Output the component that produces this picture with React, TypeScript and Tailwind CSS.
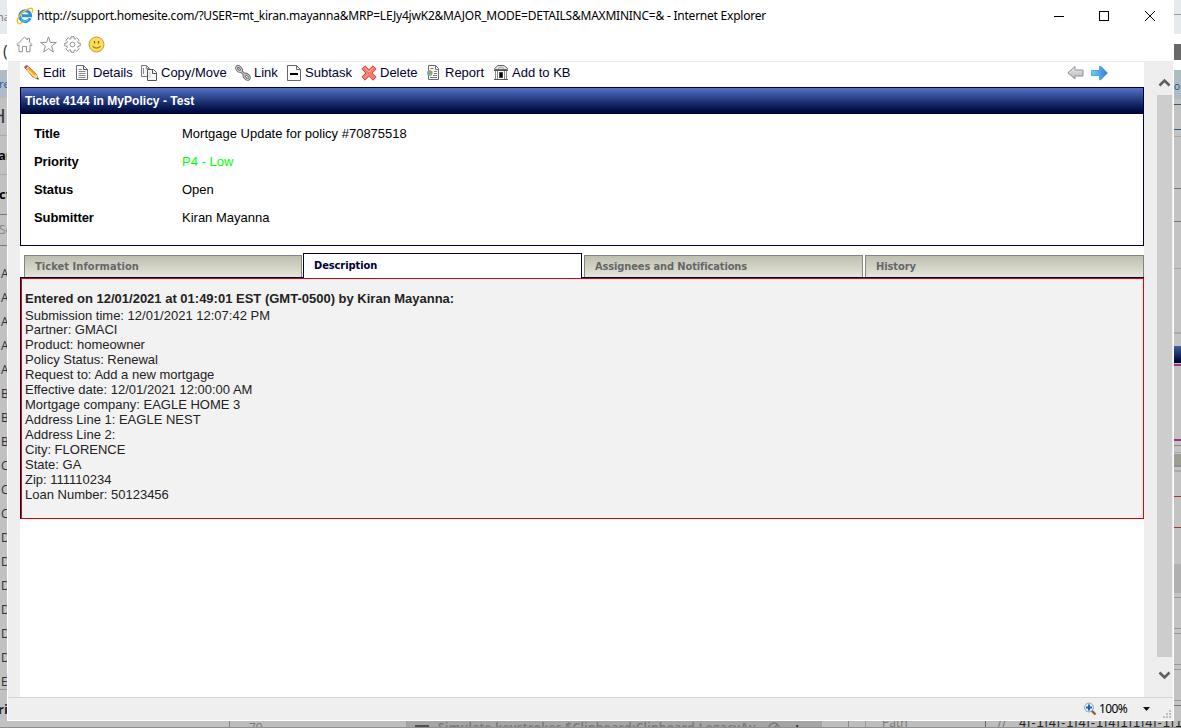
import React from "react";

const leftRows = ["A", "A", "A", "A", "A", "B", "B", "B", "C", "C", "C", "D", "D", "D", "D", "D", "D", "E"];

const description = [
  "Partner: GMACI",
  "Product: homeowner",
  "Policy Status: Renewal",
  "Request to: Add a new mortgage",
  "Effective date: 12/01/2021 12:00:00 AM",
  "Mortgage company: EAGLE HOME 3",
  "Address Line 1: EAGLE NEST",
  "Address Line 2:",
  "City: FLORENCE",
  "State: GA",
  "Zip: 111110234",
  "Loan Number: 50123456",
];

const fields = [
  { label: "Title", value: "Mortgage Update for policy #70875518", color: "text-black" },
  { label: "Priority", value: "P4 - Low", color: "text-[#00ff00]" },
  { label: "Status", value: "Open", color: "text-black" },
  { label: "Submitter", value: "Kiran Mayanna", color: "text-black" },
];

function IeLogo() {
  return (
    <svg width="18" height="18" viewBox="0 0 18 18" fill="none">
      <path d="M14.2 11.2A5.4 5.4 0 1 1 14.6 8.8H6" stroke="#2795dc" strokeWidth="3" />
      <path d="M13 11.5A5 5 0 0 1 5 12.5" stroke="#55bdf0" strokeWidth="1.2" />
      <path d="M2.3 16.5C-.5 14 3 7.5 9 3.6 13 1 16.8.3 16.7 3.2c0 .8-.3 1.6-.8 2.5" stroke="#efc02d" strokeWidth="1.5" />
      <path d="M2.3 16.5c1 .6 2.6 0 4-1" stroke="#efc02d" strokeWidth="1.3" />
    </svg>
  );
}

function HomeIcon() {
  return (
    <svg width="17" height="17" viewBox="0 0 17 17" fill="none" stroke="#929292">
      <path d="M.8 8.7 8.5 1l3 3V2.3h2v3.8l2.7 2.6-1.1 1-1.1-1v7h-3.5v-5.2h-4v5.2H3v-7l-1.1 1z" />
    </svg>
  );
}

function StarIcon() {
  return (
    <svg width="17" height="17" viewBox="0 0 17 17" fill="none" stroke="#929292">
      <path d="m8.500 .8 1.900 5.600 6 .1-4.800 3.600 1.700 5.900-4.800-3.400L3.700 16l1.700-5.900L.6 6.500l6-.1z" />
    </svg>
  );
}

function GearIcon() {
  return (
    <svg width="17" height="17" viewBox="0 0 17 17" fill="none" stroke="#929292">
      <path d="M7 .7h3v2l1.200.5L12.700 1.800l2.400 2.400-1.400 1.500.5 1.300h2v3h-2l-.5 1.300 1.400 1.500-2.400 2.400-1.500-1.400-1.200.5v2H7v-2l-1.200-.5-1.500 1.400-2.400-2.400 1.400-1.500L2.800 10h-2V7h2l.5-1.300-1.400-1.500 2.400-2.400 1.500 1.400L7 2.700z" />
      <circle cx="8.5" cy="8.5" r="2.4" />
    </svg>
  );
}

function SmileIcon() {
  return (
    <svg width="17" height="17" viewBox="0 0 17 17">
      <circle cx="8.5" cy="8.5" r="7.5" fill="#ffdc50" stroke="#b69b4d" />
      <path d="M6.500 5v2.500M10.500 5v2.500" stroke="#7a6327" strokeWidth="1.300" />
      <path d="M4.500 10c1.500 2.800 6.500 2.800 8 0" fill="none" stroke="#9c7d2c" strokeWidth="1.1" />
    </svg>
  );
}

function PencilIcon() {
  return (
    <svg width="16" height="16" viewBox="0 0 16 16">
      <path d="m1.5 3.2 2.6-2L12.3 9l2.2 5.3-5.6-2.1z" fill="#f6a91e" stroke="#9a5a12" strokeWidth=".7" />
      <path d="m3.6 4.8 6.5 6.4" stroke="#ffe07b" strokeWidth="1.5" />
      <path d="m9 12.1 3.2-3 2.4 5.3z" fill="#efd4ad" />
      <path d="m12.3 13.500 1-1.100 1.300 2.200z" fill="#222" />
      <path d="M.7 2.8C.3 1.2 2.4-.1 3.9 1L2.4 4z" fill="#e04b55" stroke="#a62f38" strokeWidth=".6" />
      <path d="m2.3 4 2.2-2.3" stroke="#d2dce5" strokeWidth="1.2" />
    </svg>
  );
}

function PageIcon() {
  return (
    <svg width="12" height="15" viewBox="0 0 12 15" fill="none">
      <path d="M.5.5h7l4 4v10H.5z" fill="#fafafa" stroke="#6d6d6d" />
      <path d="M7.5.5v4h4" stroke="#555" />
      <path d="M2.5 4.5H6m-3.5 2h7m-7 2h7m-7 2h7m-7 2h7" stroke="#888" />
    </svg>
  );
}

function CopyIcon() {
  return (
    <svg width="17" height="16" viewBox="0 0 17 16" fill="none">
      <path d="M.5.5h5l3 3v8h-8z" fill="#f6f6f6" stroke="#777" />
      <path d="M5.5.5v3h3M2.5 3v6" stroke="#888" />
      <path d="M6.5 4.500h6l3 3v8h-9z" fill="#f6f6f6" stroke="#555" />
      <path d="M11.500 4.500v4h4" stroke="#555" />
      <path d="M8.5 7v6" stroke="#ddd" strokeWidth="2" />
    </svg>
  );
}

function ChainIcon() {
  return (
    <svg width="16" height="16" viewBox="0 0 16 16" fill="none">
      <g stroke="#666" strokeWidth="2.800">
        <ellipse cx="4" cy="4" rx="3" ry="1.8" transform="rotate(45 4 4)" />
        <ellipse cx="11.7" cy="11.7" rx="3.1" ry="1.9" transform="rotate(45 11.7 11.7)" />
        <path d="m5.4 5.6 5 4.8" />
      </g>
      <g stroke="#cfcfcf" strokeWidth="1.1">
        <ellipse cx="4" cy="4" rx="3" ry="1.8" transform="rotate(45 4 4)" />
        <ellipse cx="11.7" cy="11.7" rx="3.1" ry="1.9" transform="rotate(45 11.7 11.7)" />
        <path d="m5.4 5.6 5 4.8" />
      </g>
    </svg>
  );
}

function SubtaskIcon() {
  return (
    <svg width="14" height="16" viewBox="0 0 14 16" fill="none">
      <path d="M.5.5h9l4 4v11H.5z" fill="#fafafa" stroke="#666" />
      <path d="M9.5.5v4h4" stroke="#666" />
      <path d="M3 9h8" stroke="#000" strokeWidth="2" />
    </svg>
  );
}

function DeleteIcon() {
  return (
    <svg width="16" height="16" viewBox="0 0 16 16">
      <path d="M4 .8 8 4.7 12 .8 15.2 4 11.2 8l4 4-3.2 3.2-4-4-4 4L.8 12l4-4-4-4z" fill="#f47b69" stroke="#c4473e" strokeLinejoin="round" />
      <path d="m3.7 3 4.3 4 4.3-4M3.8 12.5 7 9.3" fill="none" stroke="#ffb09c" />
    </svg>
  );
}

function ReportIcon() {
  return (
    <svg width="13" height="15" viewBox="0 0 13 15" fill="none">
      <path d="M1.5.5h7l3 3v11h-10z" fill="#fafafa" stroke="#696969" />
      <path d="M8.5.5v4h3M3.5 3.5h3M7 6.500h3m-3 2h3m-4 2h4m-7 2h7" stroke="#777" />
      <circle cx="2.700" cy="8" r="2.700" fill="#6da8dc" />
      <path d="M2.700 8V5.300a2.700 2.700 0 0 1 2.700 2.700z" fill="#ed7869" />
      <path d="M2.700 8h2.700a2.700 2.700 0 0 1-2.700 2.700z" fill="#6abd63" />
    </svg>
  );
}

function BankIcon() {
  return (
    <svg width="14" height="15" viewBox="0 0 14 15" fill="none">
      <path d="M.5 4.500v-1L4 .5h6l3.500 3v1z" fill="#e7e7e7" stroke="#666" />
      <path d="M4 3.500 7 2l3 1.500" stroke="#999" />
      <path d="M1.500 6v8m2-8v8m7-8v8m2-8v8" stroke="#888" />
      <path d="M5 7h4v6H5z" fill="#444" />
      <path d="M6 8h2v4H6z" fill="#000" />
      <path d="M0 5.500h14M0 14.500h14" stroke="#555" />
    </svg>
  );
}

function ArrowIcon({ next = false }: { next?: boolean }) {
  return (
    <svg width="17" height="16" viewBox="0 0 17 16">
      <defs>
        <linearGradient id="nextFill"><stop stopColor="#65d3f8" /><stop offset="1" stopColor="#357bd8" /></linearGradient>
        <linearGradient id="backFill" x2="0" y2="1"><stop stopColor="#eee" /><stop offset="1" stopColor="#b5b5bb" /></linearGradient>
      </defs>
      {next ? (
        <path d="M.5 5.5h8v-4L9.5 1l7 7-7 7-1-.5v-4h-8z" fill="url(#nextFill)" stroke="#4d91d9" strokeWidth=".8" />
      ) : (
        <path d="M16 5H8V1.5L.8 7.8 8 14v-3h8z" fill="url(#backFill)" stroke="#929299" />
      )}
    </svg>
  );
}

function TitleBar() {
  return (
    <header className="flex h-[31px] items-center">
      <div className="ml-2 h-[18px] w-[18px]"><IeLogo /></div>
      <h1 className="ml-[3px] w-[850px] font-['Noto_Sans',sans-serif] text-[12px] leading-[16px] tracking-[-0.23px] whitespace-pre text-black">
        http://support.homesite.com/?USER=mt_kiran.mayanna&amp;MRP=LEJy4jwK2&amp;MAJOR_MODE=DETAILS&amp;MAXMININC=&amp; - Internet Explorer
      </h1>
      <svg className="mr-[16px] ml-auto" width="104" height="12" viewBox="0 0 104 12" fill="none" stroke="#000" shapeRendering="crispEdges">
        <path d="M1 6.500h10M46.500 1.500h9v9h-9z" />
        <path d="m92 1 10 10m0-10L92 11" shapeRendering="auto" />
      </svg>
    </header>
  );
}

function Toolbar() {
  const text = "font-['Liberation_Sans',sans-serif] text-[13px] leading-[15px] whitespace-nowrap text-[#000033]";
  return (
    <nav className="flex h-[25px] items-center pb-[4px] pl-1">
      <a className="flex w-[52px] items-center gap-[3px]"><PencilIcon /><span className={text}>Edit</span></a>
      <a className="flex w-[65px] items-center gap-[5px]"><PageIcon /><span className={text}>Details</span></a>
      <a className="flex w-[94px] items-center gap-[3px]"><CopyIcon /><span className={text}>Copy/Move</span></a>
      <a className="flex w-[52px] items-center gap-[3px]"><ChainIcon /><span className={text}>Link</span></a>
      <a className="flex w-[74px] items-center gap-[4px]"><SubtaskIcon /><span className={text}>Subtask</span></a>
      <a className="flex w-[66px] items-center gap-[3px]"><DeleteIcon /><span className={text}>Delete</span></a>
      <a className="flex w-[67px] items-center gap-[5px]"><ReportIcon /><span className={text}>Report</span></a>
      <a className="flex items-center gap-[4px]"><BankIcon /><span className={text}>Add to KB</span></a>
      <div className="mr-[36px] ml-auto flex gap-[7px]"><ArrowIcon /><ArrowIcon next /></div>
    </nav>
  );
}

function Tabs() {
  const tab = "h-[22px] border-x border-t border-[#858578] bg-gradient-to-b from-[#bebeb1] to-[#e5e5d9] pl-[10px] font-['DejaVu_Sans_Condensed','DejaVu_Sans',sans-serif] text-[11px] leading-[22px] font-bold text-[#666]";
  return (
    <div className="flex h-[24px] items-end pl-1">
      <div className={`w-[278px] tracking-[0.06px] ${tab}`}>Ticket Information</div>
      <div className="relative -mb-px ml-px h-[25px] w-[279px] border-x border-t border-[#000033] bg-white pl-[10px] font-['DejaVu_Sans_Condensed','DejaVu_Sans',sans-serif] text-[11px] leading-[23px] font-bold tracking-[-0.08px] text-[#000033]">Description</div>
      <div className={`ml-[2px] w-[279px] tracking-[-0.12px] ${tab}`}>Assignees and Notifications</div>
      <div className={`ml-[2px] w-[279px] tracking-[-0.08px] ${tab}`}>History</div>
    </div>
  );
}

function Ticket() {
  return (
    <main className="w-[1124px] bg-white font-['Liberation_Sans',sans-serif] text-[13px]">
      <Toolbar />
      <section className="h-[159px] border border-[#000033]">
        <h2 className="h-[26px] bg-gradient-to-b from-[#5672c4] to-[#000033] pl-1 text-[12px] leading-[26px] font-bold tracking-[0.03px] text-white">Ticket 4144 in MyPolicy - Test</h2>
        <dl className="flex flex-col pt-[6px]">
          {fields.map((f) => (
            <div key={f.label} className="flex h-7 items-center pl-[13px] text-[13px]">
              <dt className="w-[148px] font-bold tracking-[-0.1px] text-black">{f.label}</dt>
              <dd className={f.color}>{f.value}</dd>
            </div>
          ))}
        </dl>
      </section>
      <div className="h-[7px]" />
      <Tabs />
      <section className="h-[242px] border-t border-l border-[#000033]">
        <div className="h-full border border-red-600 bg-[#f2f2f2] pt-[12px] pl-[3px] text-[13px] leading-[15px] [border-color:#ff0000]">
          <div className="text-[#222]">
            <p className="font-bold">Entered on 12/01/2021 at 01:49:01 EST (GMT-0500) by Kiran Mayanna:</p>
            <p className="pt-[2px]">Submission time: 12/01/2021 12:07:42 PM</p>
            <div className="-mt-px">{description.map((line) => <p key={line}>{line}</p>)}</div>
          </div>
        </div>
      </section>
    </main>
  );
}

function LeftBackdrop() {
  return (
    <aside className="w-[7px] shrink-0 overflow-hidden bg-[#c1c1c1] font-['Open_Sans',sans-serif] text-[13px] text-[#303038]">
      <div className="h-[34px] bg-[#e4eaed] text-[11px] leading-[34px] text-[#8a7474]"><span className="-ml-[3px]">na</span></div>
      <div className="h-[36px] bg-white pl-[3px] text-[16px] leading-[34px]">(</div>
      <div className="h-[28px] bg-[#b0bcc5] text-[11px] leading-[28px] text-[#2d579d]"><span className="-ml-px">re</span></div>
      <div className="h-[38px] border-b border-[#aaa] text-[20px] leading-[36px]"><span className="-ml-[9px]">H</span></div>
      <div className="h-[39px] border-b border-[#aaa] leading-[38px] font-bold text-black"><span className="-ml-[2px]">an</span></div>
      <div className="h-[40px] border-b border-[#777] leading-[38px] font-bold text-black"><span className="-ml-[1px]">ct</span></div>
      <div className="h-[31px] border-b border-[#777] text-[12px] leading-[29px] text-[#888]"><span className="-ml-[1px]">Se</span></div>
      <div className="h-[15px]" />
      {leftRows.map((letter, i) => <div key={i} className="h-6 pl-px text-[12px] leading-[25px]">{letter}</div>)}
      <div className="mt-[-4px] h-[40px] border-t border-[#999] leading-[38px] font-bold text-[#222]"><span className="-ml-[2px]">ri</span></div>
    </aside>
  );
}

function RightBackdrop() {
  return (
    <aside className="flex w-[7px] shrink-0 flex-col overflow-hidden bg-[#c3c3c3]">
      <div className="h-[14px] bg-[#e5eaed]" /><div className="h-px bg-[#99a]" /><div className="h-[19px] bg-[#e5eaed]" />
      <div className="h-[10px] bg-white" /><div className="h-[16px] bg-[#686868]" /><div className="h-[10px] bg-white" />
      <div className="h-[29px] bg-[#adbbc3] font-['Open_Sans',sans-serif] text-[10px] leading-[32px] text-[#24518a]">o</div>
      <div className="mt-[5px] h-px bg-[#345877]" /><div className="mt-[24px] h-px bg-[#345877]" />
      <div className="mt-[6px] h-px bg-[#aaa]" /><div className="mt-[51px] h-px bg-[#777]" />
      <div className="mt-[32px] h-px bg-[#777]" /><div className="mt-[46px] h-px bg-[#aaa]" />
      <div className="mt-[63px] h-[2px] bg-[#aaa]" /><div className="mt-[12px] h-[17px] bg-gradient-to-b from-[#435f9c] to-[#000033]" />
      <div className="mt-px h-[2px] bg-[#963486]" /><div className="mt-[73px] h-[2px] bg-[#963486]" />
      <div className="mt-[4px] h-px bg-[#889]" /><div className="mt-[6px] h-px bg-[#aaa]" />
      <div className="mt-px h-[11px] bg-[#9d9d90]" /><div className="h-[2px] bg-[#8f8f9a]" />
      <div className="mt-[3px] h-[2px] bg-[#aaa]" /><div className="mt-[24px] h-px bg-[#a33b2b]" />
      <div className="mt-[30px] h-px bg-[#a33b2b]" /><div className="mt-[36px] h-[29px] bg-[#b0b0b0]" />
      <div className="mt-[4px] h-px bg-[#999]" /><div className="mt-[30px] h-px bg-[#999]" /><div className="mt-[4px] h-px bg-[#999]" />
      <div className="mt-[30px] h-px bg-[#999]" /><div className="mt-[4px] h-px bg-[#999]" />
      <div className="mt-[30px] h-px bg-[#999]" /><div className="mt-[4px] h-px bg-[#777]" />
    </aside>
  );
}

function Scrollbar() {
  return (
    <div className="flex w-[15px] flex-col items-center">
      <svg className="mt-[14px]" width="13" height="13" viewBox="0 0 13 13" fill="none" stroke="#5e5e5e" strokeWidth="2.6"><path d="m1.500 9.500 5-5 5 5" /></svg>
      <div className="mt-[6px] h-[562px] w-[15px] bg-[#cdcdcd]" />
      <svg className="mt-[12px]" width="13" height="13" viewBox="0 0 13 13" fill="none" stroke="#5e5e5e" strokeWidth="2.6"><path d="m1.500 3.500 5 5 5-5" /></svg>
    </div>
  );
}

function StatusBar() {
  return (
    <footer className="flex h-[23px] items-center border-t border-[#d4d4d4] bg-[#efefef] font-['Noto_Sans',sans-serif] text-[12px] text-black">
      <svg className="ml-auto" width="13" height="14" viewBox="0 0 13 14" fill="none">
        <path d="m7.500 8.500 4 4" stroke="#8d5735" strokeWidth="2.3" />
        <circle cx="5" cy="5.500" r="4.400" fill="#e7f5ff" stroke="#8a9eb0" />
        <path d="M5 2.500v6m-3-3h6" stroke="#1767b8" strokeWidth="2" />
      </svg>
      <span className="ml-[2px] w-[30px] leading-[20px] tracking-[-0.6px]">100%</span>
      <svg className="ml-[14px]" width="8" height="4" viewBox="0 0 8 4"><path d="M0 0h7L3.500 4z" fill="#111" /></svg>
      <svg className="mt-[10px] mr-[1px] ml-[12px]" width="9" height="9" viewBox="0 0 9 9" fill="#bdbdbd"><path d="M6 0h2v2H6zM3 3h2v2H3zM6 3h2v2H6zM0 6h2v2H0zM3 6h2v2H3zM6 6h2v2H6z" /></svg>
    </footer>
  );
}

function BottomBackdrop() {
  return (
    <div className="flex h-[7px] overflow-hidden border-b border-[#8f8f8f] bg-[#bdbdbd] font-['Open_Sans',sans-serif] text-[12px] leading-[14px] text-[#777]">
      <div className="w-[230px] shrink-0 border-r border-[#888] bg-[#c1c1c1]" />
      <div className="w-[176px] shrink-0 pl-[19px]">79</div>
      <div className="flex w-[416px] shrink-0 bg-[#a5a5a5] font-semibold">
        <div className="mt-[4px] ml-[9px] h-[4px] w-[14px] shrink-0 bg-[#505050]" />
        <span className="ml-[9px] tracking-[0.36px] whitespace-nowrap">Simulate keystrokes $Clipboard:Clipboard.LegacyAu</span>
        <svg className="mt-px ml-[11px] shrink-0" width="12" height="12" viewBox="0 0 12 12" fill="none" stroke="#777" strokeWidth="1.5"><circle cx="6" cy="6" r="5" /><path d="m3 9 6-6" /></svg>
        <span className="ml-[16px] text-black">:</span>
      </div>
      <div className="w-[27px] shrink-0 border-r border-[#888]" />
      <div className="w-[17px] shrink-0 border-r border-[#999]" />
      <div className="w-[8px] shrink-0" />
      <div className="w-[111px] shrink-0 pl-[8px] text-[12px] leading-[3px]">Path</div>
      <div className="flex-1 border-l border-[#666] pl-[12px] font-['Liberation_Sans',sans-serif] text-[13px] leading-[4px] tracking-[0.85px] whitespace-nowrap text-[#222]"><span className="mr-[12px] text-[#777]">//</span>4|-1|4|-1|4|-1|4|1|1|4|-1|1</div>
    </div>
  );
}

export default function App() {
  return (
    <div className="h-[728px] w-[1181px] overflow-hidden bg-[#c1c1c1]">
      <div className="flex h-[721px]">
        <LeftBackdrop />
        <div className="flex w-[1167px] shrink-0 flex-col border-r border-b border-l border-white bg-white">
          <TitleBar />
          <div className="flex h-[31px] shrink-0 items-center gap-[7px] border-b border-[#ebebeb] pb-[4px] pl-[8px]">
            <HomeIcon /><StarIcon /><GearIcon /><SmileIcon />
          </div>
          <div className="flex h-[635px] shrink-0 bg-[#eee] pl-[12px]">
            <Ticket />
            <div className="w-[13px]" />
            <Scrollbar />
          </div>
          <StatusBar />
        </div>
        <RightBackdrop />
      </div>
      <BottomBackdrop />
    </div>
  );
}
